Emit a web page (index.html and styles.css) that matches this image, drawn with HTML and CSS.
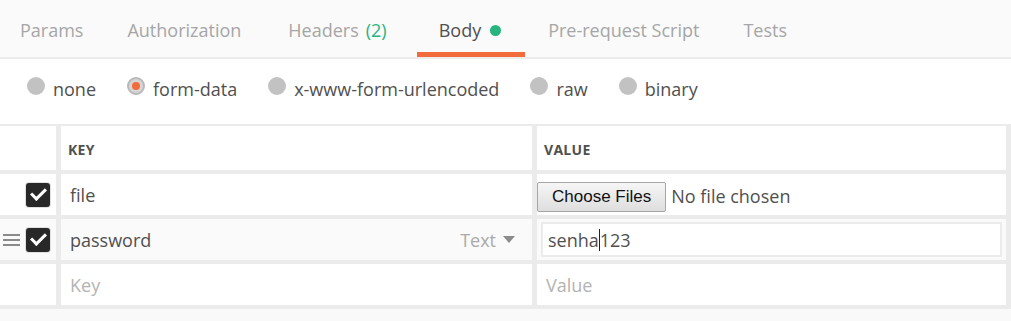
FILE: index.html
```html
<!DOCTYPE html>
<html lang="en">
<head>
    <meta charset="UTF-8">
    <meta name="viewport" content="width=device-width, initial-scale=1.0">
    <title>Request Body</title>
    <link rel="stylesheet" href="styles.css">
</head>
<body>
    <div class="tabs">
        <div class="tab">Params</div>
        <div class="tab">Authorization</div>
        <div class="tab tab-headers">Headers <span class="count">(2)</span></div>
        <div class="tab tab-body active">Body <span class="dot"></span></div>
        <div class="tab tab-pre">Pre-request Script</div>
        <div class="tab">Tests</div>
    </div>

    <div class="modes">
        <label class="mode"><span class="radio"></span>none</label>
        <label class="mode"><span class="radio checked"></span>form-data</label>
        <label class="mode"><span class="radio"></span>x-www-form-urlencoded</label>
        <label class="mode"><span class="radio"></span>raw</label>
        <label class="mode"><span class="radio"></span>binary</label>
    </div>

    <div class="grid">
        <div class="cell"></div>
        <div class="cell head">KEY</div>
        <div class="cell head">VALUE</div>

        <div class="cell check"><span class="box"></span></div>
        <div class="cell">file</div>
        <div class="cell">
            <button class="file-btn">Choose Files</button>
            <span class="file-none">No file chosen</span>
        </div>

        <div class="cell check hover">
            <span class="handle"><i></i><i></i><i></i></span>
            <span class="box"></span>
        </div>
        <div class="cell hover key-type">
            <span>password</span>
            <span class="type">Text <span class="caret"></span></span>
        </div>
        <div class="cell hover">
            <div class="value-input">senha<span class="cursor"></span>123</div>
        </div>

        <div class="cell"></div>
        <div class="cell placeholder">Key</div>
        <div class="cell placeholder">Value</div>
    </div>
</body>
</html>
```

FILE: styles.css
```css
body {
    margin: 0;
    font-family: 'Open Sans', 'Liberation Sans', sans-serif;
    font-size: 18px;
    color: #505050;
    background: #f9f9f9;
}
.tabs {
    display: flex;
    height: 57px;
    background: #fafafa;
    border-bottom: 2px solid #ececec;
    margin-left: -2px;
}
.tab {
    display: flex;
    align-items: center;
    padding: 8px 22px 0;
    color: #a6a6a6;
    border-bottom: 5px solid transparent;
    box-sizing: border-box;
}
.tab-headers {
    padding-left: 25px;
    padding-right: 30px;
}
.tab-body {
    padding-right: 24px;
}
.tab-pre {
    padding-left: 23px;
}
.tab.active {
    color: #505050;
    border-bottom-color: #f26b3a;
}
.count {
    color: #26b47f;
    margin-left: 7px;
}
.dot {
    width: 11px;
    height: 11px;
    border-radius: 50%;
    background: #26b47f;
    margin-left: 9px;
}
.modes {
    display: flex;
    align-items: center;
    height: 59px;
    padding-bottom: 6px;
    padding-left: 27px;
    background: #fff;
}
.mode {
    display: flex;
    align-items: center;
    margin-right: 31px;
}
.radio {
    width: 18px;
    height: 18px;
    border-radius: 50%;
    background: #c2c2c2;
    margin-right: 8px;
    margin-top: -5px;
    box-sizing: border-box;
    display: flex;
    align-items: center;
    justify-content: center;
}
.radio.checked {
    border: 2px solid #b8b8b8;
    background: #d6d6d6;
}
.radio.checked::after {
    content: "";
    width: 8px;
    height: 8px;
    border-radius: 50%;
    background: #f26b3a;
}
.grid {
    display: grid;
    grid-template-columns: 56px 471px 469px;
    grid-template-rows: 44px 41px 41px 41px;
    gap: 4px 5px;
    padding: 2px 5px 4px 0;
    width: 1006px;
    background: #ebebeb;
}
.cell {
    background: #fff;
    display: flex;
    align-items: center;
    padding: 0 9px;
    min-width: 0;
}
.cell.hover {
    background: #fafafa;
}
.head {
    font-size: 14px;
    font-weight: 700;
    letter-spacing: 0.3px;
    color: #505050;
    padding-left: 7px;
    padding-top: 2px;
}
.check {
    justify-content: flex-end;
    padding: 0 6px 0 0;
}
.box {
    width: 24px;
    height: 24px;
    border-radius: 3px;
    background: #282828;
    box-shadow: 0 0 0 1px #e0e0e0;
    position: relative;
}
.box::after {
    content: "";
    position: absolute;
    left: 5px;
    top: 5px;
    width: 12px;
    height: 6px;
    border-left: 3px solid #fff;
    border-bottom: 3px solid #fff;
    transform: rotate(-45deg);
}
.handle {
    display: flex;
    flex-direction: column;
    gap: 3px;
    margin-right: 6px;
}
.handle i {
    display: block;
    width: 17px;
    height: 2px;
    background: #8a8a8a;
}
.key-type {
    justify-content: space-between;
    padding-right: 17px;
}
.type {
    color: #aaa;
    display: flex;
    align-items: center;
}
.caret {
    width: 0;
    height: 0;
    border-left: 6px solid transparent;
    border-right: 6px solid transparent;
    border-top: 7px solid #8c8c8c;
    margin-left: 7px;
}
.file-btn {
    font-family: 'Liberation Sans', Arial, sans-serif;
    font-size: 17px;
    color: #111;
    height: 30px;
    padding: 0 14px;
    margin-top: 5px;
    border: 1px solid #a6a6a6;
    border-radius: 2px;
    background: linear-gradient(#f6f6f6, #dedede);
    margin-left: -9px;
}
.file-none {
    margin-left: 5px;
    margin-top: 3px;
}
.value-input {
    flex: 1;
    height: 31px;
    margin-left: -5px;
    margin-right: -5px;
    border: 2px solid #ebebeb;
    background: #fff;
    display: flex;
    align-items: center;
    padding-left: 5px;
}
.cursor {
    width: 1px;
    height: 22px;
    background: #222;
}
.placeholder {
    color: #b3b3b3;
}
```
